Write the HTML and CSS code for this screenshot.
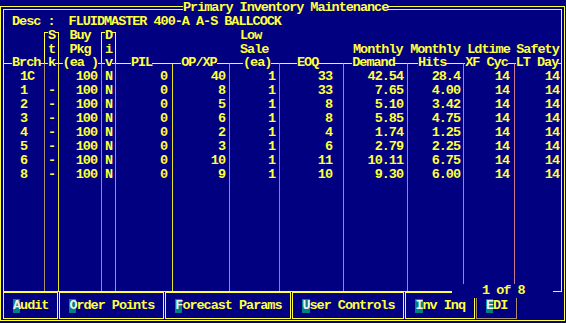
FILE: index.html
```html
<!DOCTYPE html>
<html>
  <head>
    <title>Primary Inventory Maintenance</title>
    <meta name="viewport" content="width=device-width,initial-scale=1">
    <link rel="stylesheet" href="styles.css">
  </head>
  <body>
    <div class="screen">
      <div class="frame">
        <div class="panel">
          <div class="desc">Desc :  FLUIDMASTER 400-A A-S BALLCOCK</div>
          <!-- column titles above the rule -->
          <div class="head">
            <div></div>
            <div class="h-box"><p><span>S</span><br>t</p></div>
            <div class="h-mid">Buy<br>Pkg</div>
            <div class="h-box"><p><span>D</span><br>i</p></div>
            <div></div>
            <div></div>
            <div class="h-sale">Low<br>Sale</div>
            <div></div>
            <div class="h-dem"><br>Monthly</div>
            <div class="h-mid"><br>Monthly</div>
            <div class="h-mid"><br>Ldtime</div>
            <div class="h-mid"><br>Safety</div>
          </div>
          <!-- one div per column so the separators run to the bottom -->
          <div class="grid">
            <div class="col brch"><span class="lbl">Brch</span>1C<br>1<br>2<br>3<br>4<br>5<br>6<br>8</div>
            <div class="col stk line-tan"><span class="lbl">k</span><br>-<br>-<br>-<br>-<br>-<br>-<br>-</div>
            <div class="col pkg line-yel"><span class="lbl">(ea )</span>100<br>100<br>100<br>100<br>100<br>100<br>100<br>100</div>
            <div class="col div line-tan"><span class="lbl">v</span>N<br>N<br>N<br>N<br>N<br>N<br>N<br>N</div>
            <div class="col pil line-rose"><span class="lbl">PIL</span>0<br>0<br>0<br>0<br>0<br>0<br>0<br>0</div>
            <div class="col opxp line-yel"><span class="lbl">OP/XP</span>40<br>8<br>5<br>6<br>2<br>3<br>10<br>9</div>
            <div class="col sale line-tan"><span class="lbl">(ea)</span>1<br>1<br>1<br>1<br>1<br>1<br>1<br>1</div>
            <div class="col eoq line-olive"><span class="lbl">EOQ</span>33<br>33<br>8<br>8<br>4<br>6<br>11<br>10</div>
            <div class="col dem line-tan"><span class="lbl">Demand</span>42.54<br>7.65<br>5.10<br>5.85<br>1.74<br>2.79<br>10.11<br>9.30</div>
            <div class="col hits line-tan"><span class="lbl">Hits</span>28.4<br>4.00<br>3.42<br>4.75<br>1.25<br>2.25<br>6.75<br>6.00</div>
            <div class="col cyc line-pink"><span class="lbl">XF Cyc</span>14<br>14<br>14<br>14<br>14<br>14<br>14<br>14</div>
            <div class="col day line-pink"><span class="lbl">LT Day</span>14<br>14<br>14<br>14<br>14<br>14<br>14<br>14</div>
          </div>
        </div>
        <div class="bar">
          <div class="btn"><span class="key">A</span>udit</div>
          <div class="btn"><span class="key">O</span>rder Points</div>
          <div class="btn"><span class="key">F</span>orecast Params</div>
          <div class="btn"><span class="key">U</span>ser Controls</div>
          <div class="btn"><span class="key">I</span>nv Inq</div>
          <div class="btn btn-dim"><span class="key">E</span>DI</div>
        </div>
      </div>
      <div class="title">Primary Inventory Maintenance</div>
      <div class="pager">1 of 8</div>
    </div>
  </body>
</html>
```

FILE: styles.css
```css
body {
  margin: 0;
  background: #000080;
}

.screen {
  position: relative;
  width: 565px;
  height: 323px;
  padding-top: 6px;
  box-sizing: border-box;
  background: #000080;
  color: #ffff3c;
  font: bold 13.5px/14px "Liberation Mono", monospace;
  letter-spacing: -1.025px;
}

.frame {
  border: 1px solid #ffff3c;
  padding: 2px 2px 1px;
}

.panel {
  display: flex;
  flex-direction: column;
  height: 283px;
  box-sizing: border-box;
  border: 1px solid #ffff3c;
  padding-top: 5px;
}

.desc {
  padding-left: 8px;
  white-space: pre;
}

/* header above the rule */
.head {
  display: grid;
  grid-template-columns: 40px 15px 42px 15px 56px 57px 50px 64px 64px 56px 51px 1fr;
  height: 34px;
}

.h-box {
  margin-top: 3px;
  border: 1px solid #ffff3c;
  border-bottom: 0;
  text-align: center;
}

.h-box p {
  margin: -4px 0 0;
}

.h-box span {
  background: #000080;
}

.h-mid {
  text-align: center;
}

.h-sale {
  padding-left: 11px;
}

.h-dem {
  padding-left: 10px;
}

/* body columns */
.grid {
  flex: 1;
  display: grid;
  grid-template-columns: 40px 14px 43px 14px 57px 57px 50px 64px 64px 56px 51px 1fr;
}

.col {
  border-top: 1px solid #ffff3c;
  text-align: right;
}

.lbl {
  display: table;
  margin: -8px auto 0;
  background: #000080;
  white-space: pre;
}

.line-tan { border-left: 1px solid #a8906c; }
.line-yel { border-left: 1px solid #e6e628; }
.line-rose { border-left: 1px solid #b88c80; }
.line-olive { border-left: 1px solid #8c9058; }
.line-pink { border-left: 1px solid #c87890; }

.brch {
  text-align: left;
  padding-left: 16px;
}

.brch .lbl {
  margin-left: -8px;
}

.stk,
.div {
  text-align: center;
}

.pkg { padding-right: 4px; }
.pkg .lbl { margin-right: -1px; margin-left: auto; }
.pil { padding-right: 5px; }
.opxp { padding-right: 4px; }
.sale { padding-right: 4px; }
.sale .lbl { margin-left: 13px; }
.eoq { padding-right: 11px; }
.eoq .lbl { margin-left: 17px; }
.dem { padding-right: 4px; }
.hits { padding-right: 3px; }
.hits .lbl { margin-left: 10px; }
.cyc { padding-right: 5px; }
.day { padding-right: 2px; }

/* function key bar */
.bar {
  display: flex;
  gap: 1px;
  height: 27px;
}

.btn {
  border: 1px solid #ffff3c;
  padding: 0 9px;
  line-height: 25px;
  white-space: pre;
}

.btn-dim {
  border-color: #a8906c;
}

.key {
  display: inline-block;
  line-height: 14px;
  background: #008080;
  color: #f0f0f0;
}

.title {
  position: absolute;
  left: 183px;
  top: 0;
  line-height: 15px;
  background: #000080;
}

.pager {
  position: absolute;
  left: 452px;
  top: 284px;
  width: 71px;
  padding-left: 30px;
  background: #000080;
}
```
